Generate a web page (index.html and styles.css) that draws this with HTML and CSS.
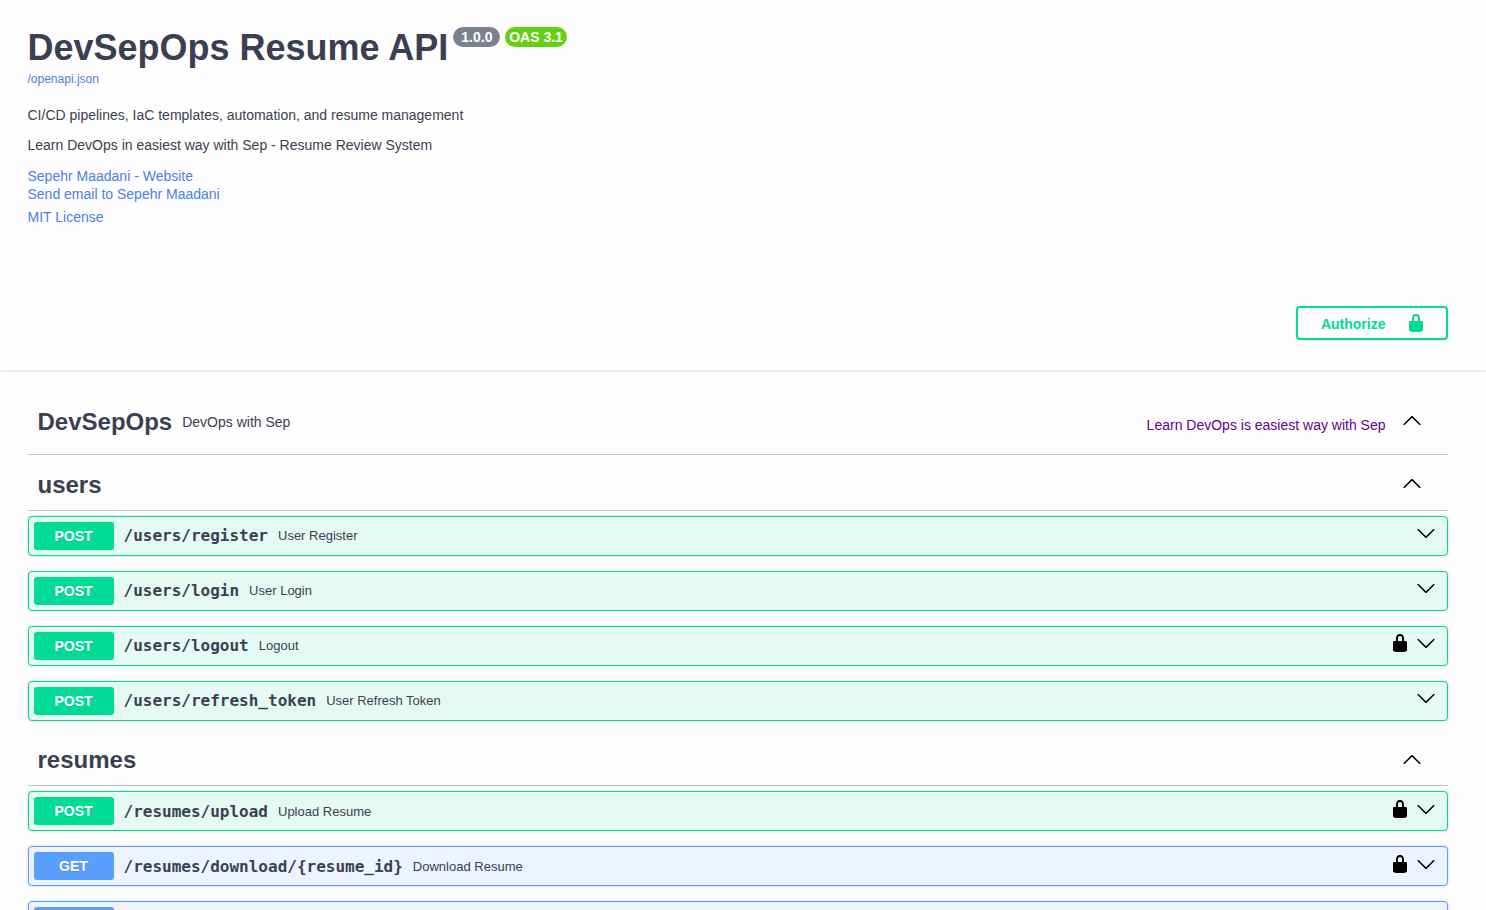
FILE: index.html
```
<!DOCTYPE html>
<html lang="en">
<head>
<meta charset="utf-8">
<title>DevSepOps Resume API - Swagger UI</title>
<link rel="stylesheet" href="styles.css">
</head>
<body>
<svg class="defs" aria-hidden="true">
  <symbol id="up" viewBox="0 0 20 20"><path d="M17.418 14.908c.272.268.709.268.979 0s.271-.701 0-.969l-7.908-7.83c-.27-.268-.707-.268-.979 0l-7.908 7.83c-.27.268-.27.701 0 .969.271.268.709.268.979 0L10 7.767l7.418 7.141z"/></symbol>
  <symbol id="down" viewBox="0 0 20 20"><path d="M17.418 6.109c.272-.268.709-.268.979 0s.271.701 0 .969l-7.908 7.83c-.27.268-.707.268-.979 0l-7.908-7.83c-.27-.268-.27-.701 0-.969.271-.268.709-.268.979 0L10 13.25l7.418-7.141z"/></symbol>
  <symbol id="lock" viewBox="0 0 20 20"><path d="M15.8 8H14V5.6C14 2.703 12.665 1 10 1 7.334 1 6 2.703 6 5.6V8H4c-.553 0-1 .646-1 1.199V17c0 .549.428 1.139.951 1.307l1.197.387C5.672 18.861 6.55 19 7.1 19h5.8c.549 0 1.428-.139 1.951-.307l1.196-.387c.524-.167.953-.757.953-1.306V9.199C17 8.646 16.352 8 15.8 8zM12 8H8V5.199C8 3.754 8.797 3 10 3c1.203 0 2 .754 2 2.199V8z"/></symbol>
</svg>
<header class="wrapper info">
  <div class="title-row">
    <h1 class="title">DevSepOps Resume API</h1>
    <span class="badge version">1.0.0</span>
    <span class="badge oas">OAS 3.1</span>
  </div>
  <a class="link spec">/openapi.json</a>
  <p class="description">CI/CD pipelines, IaC templates, automation, and resume management</p>
  <p class="description terms">Learn DevOps in easiest way with Sep - Resume Review System</p>
  <a class="link contact">Sepehr Maadani - Website</a>
  <a class="link contact">Send email to Sepehr Maadani</a>
  <a class="link license">MIT License</a>
</header>
<section class="schemes">
  <div class="wrapper auth">
    <button class="authorize"><span class="authorize-label">Authorize</span><svg class="icon"><use href="#lock"/></svg></button>
  </div>
</section>
<main class="wrapper">
  <div class="tag tag-first">
    <h2 class="tag-name">DevSepOps</h2><span class="tag-text">DevOps with Sep</span>
    <a class="external">Learn DevOps is easiest way with Sep</a>
    <svg class="icon tag-arrow"><use href="#up"/></svg>
  </div>
  <div class="tag"><h2 class="tag-name">users</h2><svg class="icon tag-arrow"><use href="#up"/></svg></div>
  <div class="operations users">
    <div class="op post"><span class="method">POST</span><span class="path">/users/register</span><span class="summary">User Register</span><svg class="icon"><use href="#down"/></svg></div>
    <div class="op post"><span class="method">POST</span><span class="path">/users/login</span><span class="summary">User Login</span><svg class="icon"><use href="#down"/></svg></div>
    <div class="op post"><span class="method">POST</span><span class="path">/users/logout</span><span class="summary">Logout</span><svg class="icon lock"><use href="#lock"/></svg><svg class="icon"><use href="#down"/></svg></div>
    <div class="op post"><span class="method">POST</span><span class="path">/users/refresh_token</span><span class="summary">User Refresh Token</span><svg class="icon"><use href="#down"/></svg></div>
  </div>
  <div class="tag tag-next"><h2 class="tag-name">resumes</h2><svg class="icon tag-arrow"><use href="#up"/></svg></div>
  <div class="operations">
    <div class="op post"><span class="method">POST</span><span class="path">/resumes/upload</span><span class="summary">Upload Resume</span><svg class="icon lock"><use href="#lock"/></svg><svg class="icon"><use href="#down"/></svg></div>
    <div class="op get"><span class="method">GET</span><span class="path">/resumes/download/{resume_id}</span><span class="summary">Download Resume</span><svg class="icon lock"><use href="#lock"/></svg><svg class="icon"><use href="#down"/></svg></div>
    <div class="op get"><span class="method"></span></div>
  </div>
</main>
</body>
</html>
```
FILE: styles.css
```
* { box-sizing: border-box; }
html, body { height: 100%; overflow: hidden; }
body {
  margin: 0;
  background: #fefefe;
  color: #3b4151;
  font-family: "Liberation Sans", Arial, sans-serif;
  font-size: 14px;
}
.defs { display: none; }
.wrapper { width: 1460px; margin-left: 7.5px; padding: 0 20px; }
.icon { width: 20px; height: 20px; flex: none; fill: #000; }

.info { height: 276px; padding-top: 27px; display: flex; flex-direction: column; align-items: flex-start; }
.title-row { display: flex; align-items: flex-start; height: 44px; }
.title { margin: 0; font-size: 36px; line-height: 41px; color: #3b3f54; }
.badge {
  height: 20px;
  margin-left: 5px;
  border-radius: 57px;
  color: #fff;
  font-size: 14px;
  font-weight: 700;
  line-height: 20px;
}
.version { padding: 0 8px; background: #7d8293; }
.oas { padding: 0 4px; margin-left: 4.7px; background: #62d10e; }
.link { color: #4a7fe6; }
.spec { font-size: 12px; line-height: 16px; margin-bottom: 20px; }
.description { margin: 0; line-height: 16px; }
.terms { margin: 14px 0; }
.contact { line-height: 18px; }
.license { margin-top: 6px; line-height: 16px; }

.schemes { height: 94px; padding-top: 30px; background: #fefefe; box-shadow: 0 1px 2px rgba(0, 0, 0, .15); }
.auth { display: flex; justify-content: flex-end; }
.authorize {
  display: flex;
  align-items: center;
  justify-content: space-between;
  width: 152px;
  height: 34px;
  padding: 0 20px 0 23.4px;
  background: transparent;
  border: 2px solid #00db95;
  border-radius: 4px;
  box-shadow: 0 1px 2px rgba(0, 0, 0, .1);
  color: #00db95;
  font: 700 14px "Liberation Sans", sans-serif;
}
.authorize-label { padding-top: 2px; }
.authorize .icon { fill: #00db95; }

.tag {
  display: flex;
  align-items: center;
  height: 56px;
  padding: 0 26px 0 10px;
  margin-bottom: 5px;
  border-bottom: 1px solid rgba(59, 65, 81, .3);
}
.tag-first { height: 65px; margin: 20px 0 0; }
.tag-next { margin-top: 9px; }
.tag-name { margin: 0; padding-top: 4px; font-size: 24px; line-height: 28px; color: #3b3f54; }
.tag-first .tag-name { padding: 0; }
.tag-text { padding-left: 10px; }
.external { margin-left: auto; padding-top: 6px; color: #64008f; }
.tag-arrow { margin-left: auto; }
.tag-next .tag-arrow { margin-top: 2px; }
.external + .tag-arrow { margin: -4px 0 0 16px; }

.operations { display: flex; flex-direction: column; gap: 15px; }
.op {
  display: flex;
  align-items: center;
  height: 40px;
  padding: 0 11px 0 5px;
  border: 1px solid;
  border-radius: 4px;
  box-shadow: 0 0 3px rgba(0, 0, 0, .19);
}
.post { background: #e5faf3; border-color: #00db95; }
.get { background: #edf4ff; border-color: #589fff; }
.method {
  width: 80px;
  height: 28px;
  border-radius: 3px;
  color: #fff;
  font-weight: 700;
  line-height: 28px;
  text-align: center;
  text-shadow: 0 1px 0 rgba(0, 0, 0, .1);
}
.post .method { background: #00db95; }
.get .method { background: #589fff; }
.path { padding: 0 10px; font: 700 16px "DejaVu Sans Mono", monospace; }
.summary { flex: 1; font-size: 13px; }
.op .icon { margin-bottom: 4px; }
.users .path, .users .summary { margin-bottom: 2px; }
.users .op .icon { margin-bottom: 6px; }
.lock { margin-right: 6px; }
```
